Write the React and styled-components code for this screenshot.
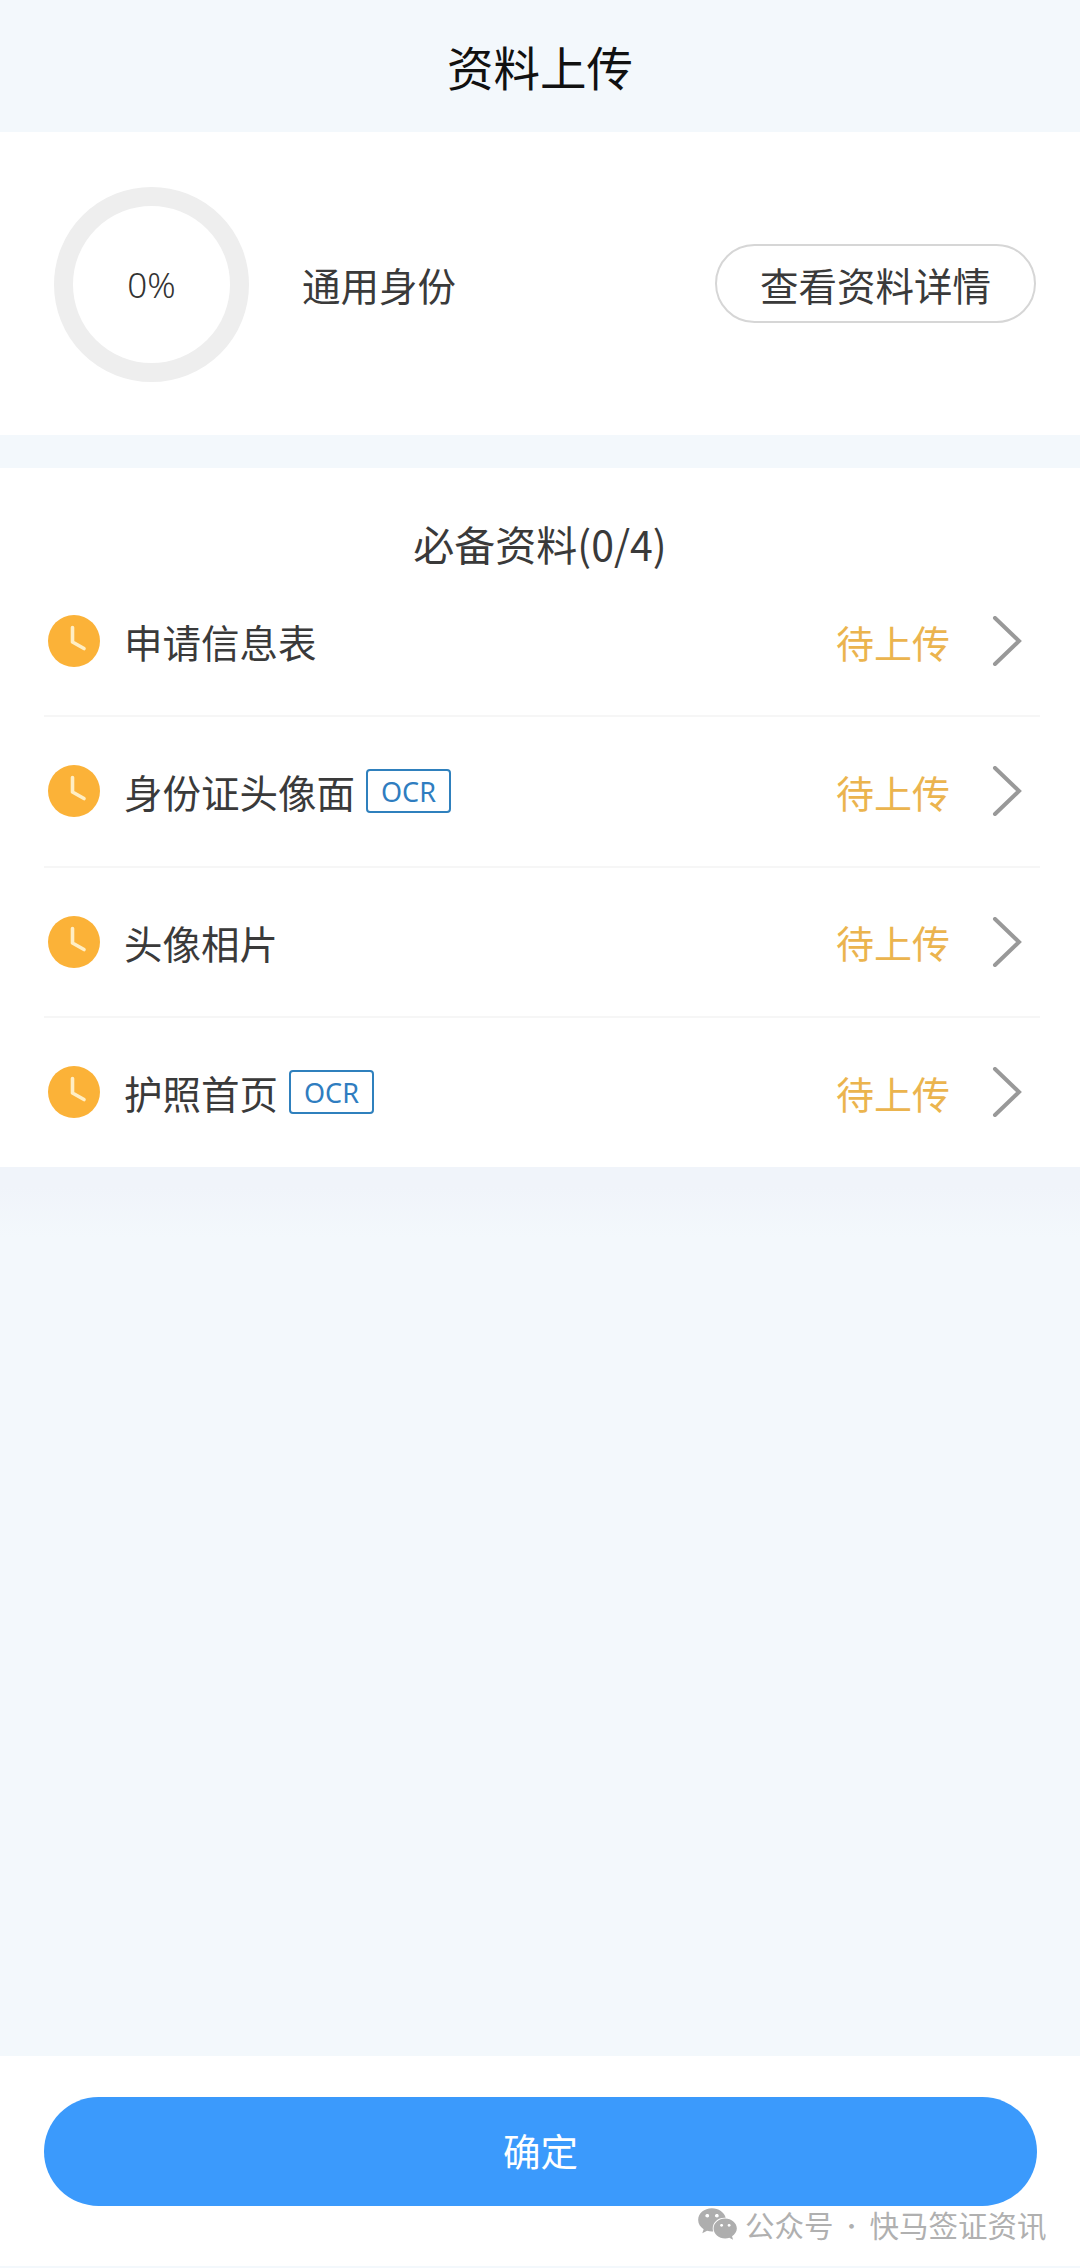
import React from "react";
import styled, { createGlobalStyle } from "styled-components";
import { FaWeixin } from "react-icons/fa";

const GlobalStyle = createGlobalStyle`
  html, body {
    margin: 0;
    padding: 0;
    background: #f3f8fc;
  }
  body {
    font-family: "Noto Sans CJK SC", "Noto Sans", sans-serif;
    color: #3a3a3a;
  }
`;

const Page = styled.div`
  position: relative;
  width: 1080px;
  height: 2268px;
  display: flex;
  flex-direction: column;
  overflow: hidden;
`;

const Header = styled.header`
  height: 132px;
  flex: none;
  display: flex;
  align-items: center;
  justify-content: center;
  font-size: 46.5px;
  color: #111;
  padding-bottom: 2px;
  box-sizing: border-box;
`;

const SummaryCard = styled.section`
  height: 303px;
  flex: none;
  background: #fff;
  display: flex;
  align-items: center;
  padding: 0 44px 0 54px;
  box-sizing: border-box;
`;

const Ring = styled.div`
  width: 195px;
  height: 195px;
  flex: none;
  margin-top: 2px;
  border: 19px solid #eeeeee;
  border-radius: 50%;
  box-sizing: border-box;
  display: flex;
  align-items: center;
  justify-content: center;
  font-family: "Noto Sans", sans-serif;
  font-weight: 300;
  font-size: 35px;
  color: #333;
`;

const SummaryLabel = styled.div`
  margin-left: 53px;
  font-size: 38.5px;
  color: #3a3a3a;
`;

const DetailButton = styled.button`
  margin-left: auto;
  width: 321px;
  height: 79px;
  background: #fff;
  border: 2px solid #d6d6d6;
  border-radius: 40px;
  font-family: inherit;
  font-size: 38.5px;
  color: #3a3a3a;
  padding: 0;
`;

const ListCard = styled.section`
  margin-top: 33px;
  height: 699px;
  flex: none;
  background: #fff;
  padding: 0 40px 0 44px;
  box-sizing: border-box;
`;

const ListTitle = styled.h2`
  margin: 0;
  height: 99px;
  display: flex;
  align-items: flex-end;
  justify-content: center;
  font-size: 41px;
  font-weight: 400;
  line-height: 48px;
  color: #3a3a3a;
  padding-right: 4px;
`;

const Row = styled.div`
  height: 150.3px;
  display: flex;
  align-items: center;
  border-bottom: 2px solid #f6f6f6;
  box-sizing: border-box;
  padding: 0 18px 0 4px;
  &:last-child {
    border-bottom: none;
    padding-bottom: 2px;
  }
`;

const RowName = styled.span`
  margin-left: 24px;
  font-size: 38.5px;
  color: #3a3a3a;
`;

const OcrTag = styled.span`
  margin-left: 11px;
  width: 85px;
  height: 44px;
  border: 2px solid #2f80bd;
  border-radius: 4px;
  box-sizing: border-box;
  display: flex;
  align-items: center;
  justify-content: center;
  font-family: "Noto Sans", sans-serif;
  font-size: 27px;
  color: #2f7dc0;
`;

const RowStatus = styled.span`
  margin-left: auto;
  font-size: 38px;
  color: #ebb44e;
`;

const Chevron = styled.svg`
  margin-left: 42px;
  width: 30px;
  height: 50px;
  flex: none;
`;

const Spacer = styled.div`
  flex: 1;
  background: linear-gradient(#f0f4fa 0, #f0f4fa 20px, #f3f8fc 70px);
`;

const Footer = styled.footer`
  height: 210px;
  flex: none;
  margin-bottom: 2px;
  background: #fff;
  padding: 41px 43px 0 44px;
  box-sizing: border-box;
`;

const ConfirmButton = styled.button`
  width: 100%;
  height: 109px;
  border: none;
  border-radius: 55px;
  background: #3b9afc;
  color: #fff;
  font-family: inherit;
  font-size: 37.5px;
  padding: 0 0 5px;
`;

const Watermark = styled.div`
  position: absolute;
  left: 697px;
  top: 2203px;
  display: flex;
  align-items: center;
  color: #b0b0b0;
  font-size: 29.5px;
  line-height: 42px;
`;

const WatermarkIcon = styled(FaWeixin)`
  width: 41px;
  height: 36px;
  margin-right: 7px;
  color: #aeaeae;
`;

const MidDot = styled.span`
  width: 36px;
  text-align: center;
  font-size: 22px;
`;

const ClockIcon = () => (
  <svg width="52" height="52" viewBox="0 0 52 52" style={{ flex: "none" }}>
    <circle cx="26" cy="26" r="26" fill="#fbb238" />
    <path
      d="M24.5 12.5 V27 L36 33.5"
      fill="none"
      stroke="#ffeec4"
      strokeWidth="3.6"
      strokeLinecap="round"
      strokeLinejoin="round"
    />
  </svg>
);

const rows = [
  { name: "申请信息表" },
  { name: "身份证头像面", ocr: true },
  { name: "头像相片" },
  { name: "护照首页", ocr: true },
];

const App = () => (
  <Page>
    <GlobalStyle />
    <Header>资料上传</Header>
    <SummaryCard>
      <Ring>0%</Ring>
      <SummaryLabel>通用身份</SummaryLabel>
      <DetailButton>查看资料详情</DetailButton>
    </SummaryCard>
    <ListCard>
      <ListTitle>必备资料(0/4)</ListTitle>
      {rows.map((row) => (
        <Row key={row.name}>
          <ClockIcon />
          <RowName>{row.name}</RowName>
          {row.ocr ? <OcrTag>OCR</OcrTag> : null}
          <RowStatus>待上传</RowStatus>
          <Chevron viewBox="0 0 30 50">
            <path
              d="M3 2 L27 25 L3 48"
              fill="none"
              stroke="#999"
              strokeWidth="4"
              strokeLinecap="round"
              strokeLinejoin="miter"
            />
          </Chevron>
        </Row>
      ))}
    </ListCard>
    <Spacer />
    <Footer>
      <ConfirmButton>确定</ConfirmButton>
    </Footer>
    <Watermark>
      <WatermarkIcon />
      公众号
      <MidDot>·</MidDot>
      快马签证资讯
    </Watermark>
  </Page>
);

export default App;
